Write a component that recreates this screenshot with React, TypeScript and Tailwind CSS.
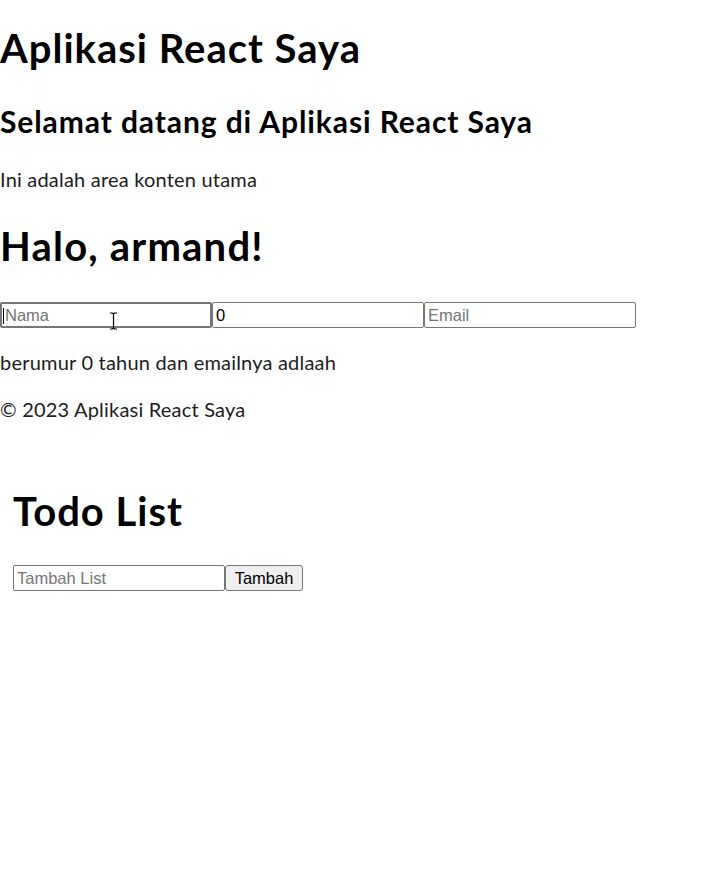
import { useState } from "react";

export default function App() {
  const [nama, setNama] = useState("");
  const [umur, setUmur] = useState("0");
  const [email, setEmail] = useState("");
  const [todo, setTodo] = useState("");

  const inputClass =
    "w-[212px] h-[26px] border border-[#767676] rounded-[2px] px-[3px] text-[16.5px] text-black bg-white placeholder:text-[#757575] outline-none";

  return (
    <div className="min-h-screen bg-white text-[#1c1c1c]" style={{ fontFamily: "Lato, 'Noto Sans', sans-serif" }}>
      <header>
        <h1 className="mt-[24px] text-[40px] leading-[48px] font-bold tracking-[0.025em] text-black">
          Aplikasi React Saya
        </h1>
      </header>

      <main>
        <h2 className="mt-[31px] text-[30px] leading-[36px] font-bold tracking-[0.03em] text-black">
          Selamat datang di Aplikasi React Saya
        </h2>
        <p className="mt-[28px] text-[20px] leading-[24px] tracking-[0.01em]">Ini adalah area konten utama</p>

        <h1 className="mt-[31px] text-[40px] leading-[48px] font-bold tracking-[0.03em] text-black">Halo, armand!</h1>

        <div className="mt-[32px] flex relative" style={{ fontFamily: "'Liberation Sans', Arial, sans-serif" }}>
          <input
            className={inputClass + " border-2 border-[#101010]"}
            placeholder="Nama"
            value={nama}
            onChange={(e) => setNama(e.target.value)}
          />
          <input className={inputClass} type="number" value={umur} onChange={(e) => setUmur(e.target.value)} />
          <input
            className={inputClass}
            placeholder="Email"
            value={email}
            onChange={(e) => setEmail(e.target.value)}
          />
          {/* text caret + mouse cursor */}
          <span className="absolute left-[3px] top-[6px] w-px h-[16px] bg-black" />
          <svg className="absolute left-[109px] top-[10px]" width="9" height="18" viewBox="0 0 9 18">
            <path d="M1 1h2.5L4.5 2 5.5 1H8M4.5 2v14M1 17h2.5l1-1 1 1H8" fill="none" stroke="#000" strokeWidth="1.2" />
          </svg>
        </div>

        <p className="mt-[22px] text-[20px] leading-[24px] tracking-[0.01em]">
          berumur {umur} tahun dan emailnya adlaah {email}
        </p>
      </main>

      <footer>
        <p className="mt-[23px] text-[20px] leading-[24px] tracking-[0.01em]">© 2023 Aplikasi React Saya</p>
      </footer>

      <section className="pl-[13px]">
        <h1 className="mt-[66px] text-[40px] leading-[48px] font-bold tracking-[0.025em] text-black">Todo List</h1>
        <div className="mt-[30px] flex" style={{ fontFamily: "'Liberation Sans', Arial, sans-serif" }}>
          <input
            className={inputClass}
            placeholder="Tambah List"
            value={todo}
            onChange={(e) => setTodo(e.target.value)}
          />
          <button className="w-[78px] h-[26px] border border-[#767676] rounded-[3px] bg-[#efefef] text-[16.5px] text-black">
            Tambah
          </button>
        </div>
      </section>
    </div>
  );
}
